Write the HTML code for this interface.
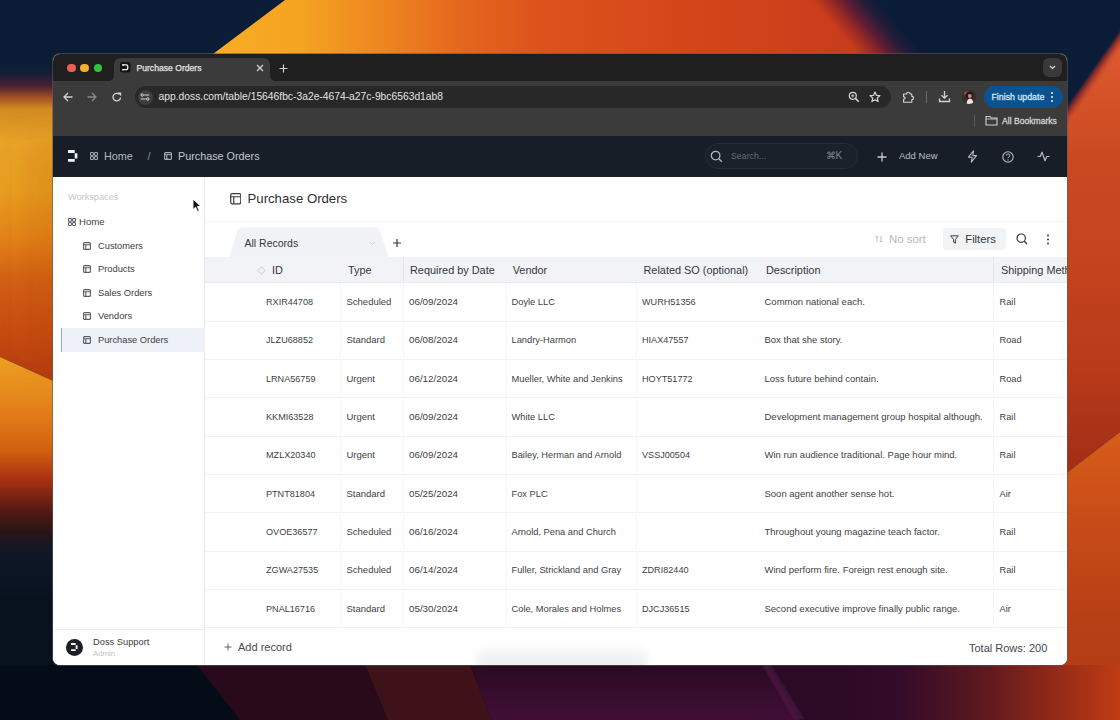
<!DOCTYPE html>
<html><head><meta charset="utf-8">
<style>
*{box-sizing:border-box;margin:0;padding:0}
html,body{width:1120px;height:720px;overflow:hidden;background:#0b1d36;font-family:"Liberation Sans",sans-serif}
.abs{position:absolute}
#bg{position:absolute;left:0;top:0}
#win{position:absolute;left:53px;top:54px;width:1014px;height:611px;border-radius:7px;overflow:hidden;background:#fff;box-shadow:0 0 0 1px rgba(90,90,90,.6)}
#tabs{position:absolute;left:0;top:0;width:1014px;height:27px;background:#1f1f1f}
#toolbar{position:absolute;left:0;top:27px;width:1014px;height:54.5px;background:#3b3b3b}
#apphdr{position:absolute;left:0;top:81.5px;width:1014px;height:41.5px;background:#171e27}
#side{position:absolute;left:0;top:123px;width:152px;height:488px;background:#fff;border-right:1px solid #e8e9ec}
#main{position:absolute;left:152px;top:123px;width:862px;height:488px;background:#fff}
.t{position:absolute;white-space:nowrap;line-height:1}
.c{height:20px;line-height:20px}
.dot{position:absolute;width:8.6px;height:8.6px;border-radius:50%}
#clip{position:absolute;left:53px;top:54px;width:1014px;height:611px;overflow:hidden;border-radius:7px}
#inner{position:absolute;left:-53px;top:-54px;width:1120px;height:720px}
#chrome,#app{position:absolute;left:0;top:0;width:1120px;height:720px}
</style></head><body>
<svg id="bg" width="1120" height="720" viewBox="0 0 1120 720">
  <defs>
    <linearGradient id="gTop" x1="200" y1="0" x2="860" y2="0" gradientUnits="userSpaceOnUse">
      <stop offset="0" stop-color="#f8ae24"/>
      <stop offset="0.15" stop-color="#f5a422"/>
      <stop offset="0.26" stop-color="#ee8a20"/>
      <stop offset="0.4" stop-color="#e4661e"/>
      <stop offset="0.52" stop-color="#dc521c"/>
      <stop offset="0.72" stop-color="#d6461a"/>
      <stop offset="1" stop-color="#c83c1c"/>
    </linearGradient>
    <linearGradient id="gLeftA" x1="0" y1="60" x2="0" y2="385" gradientUnits="userSpaceOnUse">
      <stop offset="0" stop-color="#0b1d36"/>
      <stop offset="0.04" stop-color="#121e38"/>
      <stop offset="0.08" stop-color="#4a2034"/>
      <stop offset="0.115" stop-color="#a05024"/>
      <stop offset="0.15" stop-color="#d08a20"/>
      <stop offset="0.25" stop-color="#e8a428"/>
      <stop offset="0.4" stop-color="#e8a020"/>
      <stop offset="0.55" stop-color="#e28418"/>
      <stop offset="0.68" stop-color="#d26014"/>
      <stop offset="0.85" stop-color="#c44a10"/>
      <stop offset="1" stop-color="#b0380e"/>
    </linearGradient>
    <linearGradient id="gLeftB" x1="0" y1="360" x2="0" y2="600" gradientUnits="userSpaceOnUse">
      <stop offset="0" stop-color="#eca020"/>
      <stop offset="0.25" stop-color="#e07818"/>
      <stop offset="0.38" stop-color="#d06010"/>
      <stop offset="0.5" stop-color="#a83010"/>
      <stop offset="0.62" stop-color="#5a1a14"/>
      <stop offset="0.72" stop-color="#281418"/>
      <stop offset="0.8" stop-color="#101828"/>
      <stop offset="1" stop-color="#08121e"/>
    </linearGradient>
    <linearGradient id="gRightA" x1="0" y1="40" x2="0" y2="480" gradientUnits="userSpaceOnUse">
      <stop offset="0" stop-color="#e05a30"/>
      <stop offset="0.25" stop-color="#cc4a22"/>
      <stop offset="0.5" stop-color="#c4441e"/>
      <stop offset="0.75" stop-color="#b83a1a"/>
      <stop offset="1" stop-color="#a02c16"/>
    </linearGradient>
    <linearGradient id="gRightB" x1="0" y1="430" x2="0" y2="720" gradientUnits="userSpaceOnUse">
      <stop offset="0" stop-color="#d85e1a"/>
      <stop offset="0.3" stop-color="#c84c18"/>
      <stop offset="0.65" stop-color="#b84016"/>
      <stop offset="1" stop-color="#b03a16"/>
    </linearGradient>
    <linearGradient id="gBot" x1="840" y1="0" x2="1120" y2="0" gradientUnits="userSpaceOnUse">
      <stop offset="0" stop-color="#2c0a26"/>
      <stop offset="0.22" stop-color="#340b28"/>
      <stop offset="0.5" stop-color="#5a1820"/>
      <stop offset="0.72" stop-color="#8a2618"/>
      <stop offset="1" stop-color="#c03c14"/>
    </linearGradient>
    <linearGradient id="gEdge" x1="831" y1="30" x2="873" y2="-5" gradientUnits="userSpaceOnUse">
      <stop offset="0" stop-color="#c83c1c" stop-opacity="0"/>
      <stop offset="0.1" stop-color="#c83c1c"/>
      <stop offset="0.3" stop-color="#a02c22"/>
      <stop offset="0.55" stop-color="#5e1c34"/>
      <stop offset="0.8" stop-color="#221c3a"/>
      <stop offset="1" stop-color="#0b1d36"/>
    </linearGradient>
    <linearGradient id="gREdge" x1="1087" y1="73" x2="1100" y2="82" gradientUnits="userSpaceOnUse">
      <stop offset="0" stop-color="#0b1d36" stop-opacity="0"/>
      <stop offset="0.15" stop-color="#1e1a36" stop-opacity="1"/>
      <stop offset="0.5" stop-color="#8a2a2a" stop-opacity="0.7"/>
      <stop offset="1" stop-color="#d85a30" stop-opacity="0"/>
    </linearGradient>
    <linearGradient id="gBotMid" x1="0" y1="665" x2="0" y2="720" gradientUnits="userSpaceOnUse">
      <stop offset="0" stop-color="#2a0a20"/>
      <stop offset="1" stop-color="#420e38"/>
    </linearGradient>
    <linearGradient id="gLeftH" x1="0" y1="0" x2="60" y2="0" gradientUnits="userSpaceOnUse">
      <stop offset="0" stop-color="#b04010" stop-opacity="0"/>
      <stop offset="0.5" stop-color="#b04010" stop-opacity="0.08"/>
      <stop offset="1" stop-color="#b04010" stop-opacity="0.3"/>
    </linearGradient>
    <filter id="blur12" x="-50%" y="-50%" width="200%" height="200%"><feGaussianBlur stdDeviation="14"/></filter>
    <filter id="blur4" x="-20%" y="-20%" width="140%" height="140%"><feGaussianBlur stdDeviation="4"/></filter>
    <filter id="blur1"><feGaussianBlur stdDeviation="1"/></filter>
  </defs>
  <rect width="1120" height="720" fill="#0b1d36"/>
  <!-- top -->
  <polygon points="285,0 830,0 880,60 205,60" fill="url(#gTop)"/>
  <polygon points="790,0 1000,0 1000,60 830,60" fill="url(#gEdge)"/>
  <!-- top right streak -->
  <!-- left -->
  <polygon points="0,40 60,40 60,384 0,357" fill="url(#gLeftA)"/>
  <polygon points="0,357 60,384 60,720 0,720" fill="url(#gLeftB)"/>
  <polygon points="-10,140 60,140 60,370 -10,345" fill="url(#gLeftH)" filter="url(#blur12)"/>
  <!-- right -->
  <polygon points="1060,116 1120,33 1120,432 1060,478" fill="url(#gRightA)"/>
  <polygon points="1040,145 1130,15 1150,35 1060,165" fill="url(#gREdge)"/>
  <polygon points="1060,478 1120,432 1120,665 1060,665" fill="url(#gRightB)"/>
  <!-- bottom -->
  <rect x="0" y="665" width="1120" height="60" fill="#040c18"/>
  <polygon points="197,665 365,665 388,720 240,720" fill="#290a1a"/>
  <polygon points="365,665 470,665 492,720 388,720" fill="#3e1218"/>
  <polygon points="470,665 768,665 800,720 492,720" fill="url(#gBotMid)"/>
  <polygon points="762,665 772,665 806,720 794,720" fill="#4c1640" opacity="0.8" filter="url(#blur1)"/>
  <polygon points="772,665 1120,665 1120,720 806,720" fill="url(#gBot)"/>
</svg>
<div id="win">
  <div id="tabs"></div>
  <div id="toolbar"></div>
  <div id="apphdr"></div>
  <div id="side"></div>
  <div id="main"></div>
</div>
<div id="clip"><div id="inner">
<div id="chrome">
  <!-- traffic lights -->
  <div class="dot" style="left:67.1px;top:63.7px;background:#ee5e58"></div>
  <div class="dot" style="left:80.3px;top:63.7px;background:#f4b02c"></div>
  <div class="dot" style="left:93.6px;top:63.7px;background:#2fc541"></div>
  <!-- active tab -->
  <svg class="abs" style="left:105px;top:57px" width="176" height="26" viewBox="0 0 176 26">
    <path d="M0 25 Q9 25 9 17 L9 8 Q9 1 16 1 L158 1 Q165 1 165 8 L165 17 Q165 25 174 25 L176 26 L0 26 Z" fill="#3b3b3b"/>
  </svg>
  <svg class="abs" style="left:120px;top:62.3px" width="10.5" height="10.5" viewBox="0 0 10.5 10.5">
    <rect width="10.5" height="10.5" rx="2.2" fill="#141414"/>
    <path d="M2.2 2.8 H6.2 Q7.8 2.8 7.8 4.4 V6.1 Q7.8 7.7 6.2 7.7 H2.2" stroke="#f0f0f0" stroke-width="1.3" fill="none"/>
    <path d="M2.2 2.8 H4.2 M2.2 7.7 H4.2" stroke="#f0f0f0" stroke-width="1.3"/>
  </svg>
  <div class="t c" style="left:136.5px;top:58px;font-size:8.6px;color:#e4e4e4;-webkit-text-stroke:0.25px #e4e4e4">Purchase Orders</div>
  <svg class="abs" style="left:255.5px;top:64px" width="8" height="8" viewBox="0 0 8 8"><path d="M1 1 L7 7 M7 1 L1 7" stroke="#d8d8d8" stroke-width="1.2"/></svg>
  <svg class="abs" style="left:279px;top:63.5px" width="9" height="9" viewBox="0 0 9 9"><path d="M4.5 0.5 V8.5 M0.5 4.5 H8.5" stroke="#cfcfcf" stroke-width="1.2"/></svg>
  <!-- tab strip right dropdown -->
  <div class="abs" style="left:1043px;top:58px;width:19px;height:19px;border-radius:6px;background:#3a3a3a"></div>
  <svg class="abs" style="left:1049px;top:65px" width="7" height="5" viewBox="0 0 7 5"><path d="M1 1 L3.5 3.5 L6 1" stroke="#ddd" stroke-width="1.2" fill="none"/></svg>
  <!-- nav buttons -->
  <svg class="abs" style="left:63px;top:92px" width="10" height="10" viewBox="0 0 10 10"><path d="M9.5 5 H1 M5 1 L1 5 L5 9" stroke="#d4d4d4" stroke-width="1.3" fill="none"/></svg>
  <svg class="abs" style="left:87px;top:92px" width="10" height="10" viewBox="0 0 10 10"><path d="M0.5 5 H9 M5 1 L9 5 L5 9" stroke="#8a8a8a" stroke-width="1.3" fill="none"/></svg>
  <svg class="abs" style="left:111.5px;top:92px" width="10" height="10" viewBox="0 0 10 10"><path d="M8.6 5.6 A3.8 3.8 0 1 1 7.3 2.2" stroke="#d4d4d4" stroke-width="1.3" fill="none"/><path d="M5.4 0.4 L9.2 0.4 L9.2 4.2 Z" fill="#d4d4d4"/></svg>
  <!-- url pill -->
  <div class="abs" style="left:134.5px;top:85.5px;width:756px;height:22.5px;border-radius:12px;background:#282828"></div>
  <div class="abs" style="left:137.5px;top:89.5px;width:15px;height:15px;border-radius:8px;background:#3e3e3e"></div>
  <svg class="abs" style="left:140px;top:92px" width="10" height="10" viewBox="0 0 10 10"><path d="M4.2 3 H9.2 M0.8 7 H5.8" stroke="#d8d8d8" stroke-width="1.2"/><circle cx="2.2" cy="3" r="1.2" fill="none" stroke="#d8d8d8" stroke-width="1"/><circle cx="7.8" cy="7" r="1.2" fill="none" stroke="#d8d8d8" stroke-width="1"/></svg>
  <div class="t c" style="left:158.5px;top:87px;font-size:10.3px;color:#e3e3e3;letter-spacing:0px">app.doss.com/table/15646fbc-3a2e-4674-a27c-9bc6563d1ab8</div>
  <svg class="abs" style="left:847.5px;top:91px" width="12" height="12" viewBox="0 0 12 12"><circle cx="4.8" cy="4.8" r="3.5" stroke="#d4d4d4" stroke-width="1.2" fill="none"/><path d="M7.4 7.4 L10.8 10.8" stroke="#d4d4d4" stroke-width="1.6"/><path d="M3.2 4.8 H6.4 M4.8 3.2 V6.4" stroke="#d4d4d4" stroke-width="0.9"/></svg>
  <svg class="abs" style="left:869px;top:90.5px" width="12" height="12" viewBox="0 0 12 12"><path d="M6 1 L7.4 4.3 L11 4.6 L8.3 7 L9.1 10.6 L6 8.7 L2.9 10.6 L3.7 7 L1 4.6 L4.6 4.3 Z" stroke="#d4d4d4" stroke-width="1.2" fill="none" stroke-linejoin="round"/></svg>
  <!-- right toolbar icons -->
  <svg class="abs" style="left:902px;top:90.5px" width="13" height="13" viewBox="0 0 13 13"><path d="M1.6 3 H4.6 Q4.6 1.2 6.3 1.2 Q8 1.2 8 3 H9.8 V5.3 Q11.6 5.3 11.6 7 Q11.6 8.7 9.8 8.7 V11.2 H1.6 V8.2 Q3.2 8.2 3.2 7 Q3.2 5.8 1.6 5.8 Z" stroke="#d4d4d4" stroke-width="1.15" fill="none" stroke-linejoin="round"/></svg>
  <div class="abs" style="left:926px;top:91px;width:1px;height:12px;background:#6a6a6a"></div>
  <svg class="abs" style="left:938px;top:90px" width="13" height="13" viewBox="0 0 13 13"><path d="M6.5 1 V8 M3.5 5.2 L6.5 8.2 L9.5 5.2" stroke="#d4d4d4" stroke-width="1.3" fill="none"/><path d="M1.5 8.5 V11.5 H11.5 V8.5" stroke="#d4d4d4" stroke-width="1.3" fill="none"/></svg>
  <svg class="abs" style="left:962px;top:90px" width="14" height="14" viewBox="0 0 14 14"><defs><clipPath id="av"><circle cx="7" cy="7" r="7"/></clipPath></defs><g clip-path="url(#av)"><rect width="14" height="14" fill="#3a2a28"/><circle cx="7.5" cy="5.2" r="3.6" fill="#2a1612"/><circle cx="7.8" cy="6" r="2" fill="#c08a78"/><path d="M4.5 14 Q5 9 8 8.6 Q11 9 11.5 14 Z" fill="#e8e4e2"/><path d="M2 3 Q4 0.5 8 1 Q3 2 3 6 Z" fill="#8a6a60"/></g></svg>
  <div class="abs" style="left:984.3px;top:85.8px;width:78.5px;height:22px;border-radius:11px;background:#0b5290"></div>
  <div class="t c" style="left:991.5px;top:86.5px;font-size:8.8px;color:#d4e4f4;-webkit-text-stroke:0.3px #d4e4f4">Finish update</div>
  <svg class="abs" style="left:1050px;top:91px" width="4" height="12" viewBox="0 0 4 12"><circle cx="2" cy="2" r="1.1" fill="#dfe9f5"/><circle cx="2" cy="6" r="1.1" fill="#dfe9f5"/><circle cx="2" cy="10" r="1.1" fill="#dfe9f5"/></svg>
  <!-- bookmarks bar -->
  <div class="abs" style="left:973.5px;top:115px;width:1px;height:12px;background:#5a5a5a"></div>
  <svg class="abs" style="left:984.8px;top:115px" width="13" height="11" viewBox="0 0 13 11"><path d="M1 1.5 H5 L6.3 3 H12 V10 H1 Z" stroke="#cfcfcf" stroke-width="1.1" fill="none"/><path d="M1 4 H12" stroke="#cfcfcf" stroke-width="0.9"/></svg>
  <div class="t c" style="left:1002px;top:111.3px;font-size:8.6px;color:#d4d4d4;-webkit-text-stroke:0.3px #d4d4d4">All Bookmarks</div>
</div>
<div id="app">
<svg class="abs" style="left:67.8px;top:150px" width="10" height="12" viewBox="0 0 10 12"><path d="M0 0 H6.7 V2.9 H0 Z M6.7 3.3 H9.4 V8.6 H6.7 Z M0 9 H6.7 V11.8 H0 Z" fill="#f2f2f2"/></svg>
<svg class="abs" style="left:90px;top:152px" width="8" height="8" viewBox="0 0 8 8"><rect x="0.5" y="0.5" width="2.9" height="2.9" rx="0.3" stroke="#aab0b8" stroke-width="1" fill="none"/><rect x="4.6" y="0.5" width="2.9" height="2.9" rx="0.3" stroke="#aab0b8" stroke-width="1" fill="none"/><rect x="0.5" y="4.6" width="2.9" height="2.9" rx="0.3" stroke="#aab0b8" stroke-width="1" fill="none"/><rect x="4.6" y="4.6" width="2.9" height="2.9" rx="0.3" stroke="#aab0b8" stroke-width="1" fill="none"/></svg>
<div class="t c" style="left:104px;top:146px;font-size:10.8px;color:#b4bac2">Home</div>
<div class="t c" style="left:147.5px;top:146px;font-size:10.8px;color:#8a9098">/</div>
<svg class="abs" style="left:164px;top:152px" width="8" height="8" viewBox="0 0 8 8"><rect x="0.6" y="0.6" width="6.8" height="6.8" rx="1" stroke="#aab0b8" stroke-width="1.1" fill="none"/><path d="M0.6 2.8 H7.4 M2.8 2.8 V7.4" stroke="#aab0b8" stroke-width="1.1"/></svg>
<div class="t c" style="left:178px;top:146px;font-size:10.8px;color:#c2c7ce">Purchase Orders</div>
<div class="abs" style="left:704.5px;top:142.5px;width:153px;height:26.5px;border-radius:13px;background:#19212b;border:1px solid #262e38"></div>
<svg class="abs" style="left:709.5px;top:150px" width="13" height="13" viewBox="0 0 13 13"><circle cx="5.6" cy="5.6" r="4.3" stroke="#aeb4bc" stroke-width="1.3" fill="none"/><path d="M8.8 8.8 L11.8 11.8" stroke="#aeb4bc" stroke-width="1.4"/></svg>
<div class="t c" style="left:731px;top:146px;font-size:8.8px;color:#646b74">Search...</div>
<div class="t c" style="left:825.5px;top:146px;font-size:10px;color:#7d848c">&#8984;K</div>
<svg class="abs" style="left:877px;top:151.5px" width="10" height="10" viewBox="0 0 10 10"><path d="M5 0.5 V9.5 M0.5 5 H9.5" stroke="#c8ccd2" stroke-width="1.3"/></svg>
<div class="t c" style="left:899px;top:146px;font-size:9.5px;color:#b8bdc4">Add New</div>
<svg class="abs" style="left:967px;top:150px" width="11" height="13" viewBox="0 0 11 13"><path d="M6.5 0.8 L1.5 7.2 H5.2 L4.3 12.2 L9.5 5.6 H5.8 Z" stroke="#b8bdc4" stroke-width="1.1" fill="none" stroke-linejoin="round"/></svg>
<svg class="abs" style="left:1001.5px;top:150.5px" width="12" height="12" viewBox="0 0 12 12"><circle cx="6" cy="6" r="5.2" stroke="#b8bdc4" stroke-width="1.1" fill="none"/><path d="M4.4 4.6 A1.7 1.7 0 1 1 6.6 6.2 Q6 6.5 6 7.3" stroke="#b8bdc4" stroke-width="1" fill="none"/><circle cx="6" cy="8.9" r="0.6" fill="#b8bdc4"/></svg>
<svg class="abs" style="left:1037px;top:151px" width="13" height="11" viewBox="0 0 13 11"><path d="M0.5 5.5 H3.2 L5 1.2 L8 9.8 L9.8 5.5 H12.5" stroke="#b8bdc4" stroke-width="1.2" fill="none" stroke-linejoin="round"/></svg>
<div class="t c" style="left:68px;top:187px;font-size:9.2px;color:#c6c8cc">Workspaces</div>
<svg class="abs" style="left:68px;top:218px" width="8" height="8" viewBox="0 0 8 8"><rect x="0.5" y="0.5" width="2.9" height="2.9" rx="0.3" stroke="#555a60" stroke-width="1" fill="none"/><rect x="4.6" y="0.5" width="2.9" height="2.9" rx="0.3" stroke="#555a60" stroke-width="1" fill="none"/><rect x="0.5" y="4.6" width="2.9" height="2.9" rx="0.3" stroke="#555a60" stroke-width="1" fill="none"/><rect x="4.6" y="4.6" width="2.9" height="2.9" rx="0.3" stroke="#555a60" stroke-width="1" fill="none"/></svg>
<div class="t c" style="left:79px;top:211.7px;font-size:9.6px;color:#3a3d42">Home</div>
<div class="abs" style="left:60.5px;top:328px;width:144.5px;height:24px;background:#eef2f8;border-left:1px solid #8eaad0"></div>
<svg class="abs" style="left:83.3px;top:242px" width="8" height="8" viewBox="0 0 8 8"><rect x="0.6" y="0.6" width="6.8" height="6.8" rx="1" stroke="#5a5e64" stroke-width="1.1" fill="none"/><path d="M0.6 2.8 H7.4 M2.8 2.8 V7.4" stroke="#5a5e64" stroke-width="1.1"/></svg>
<div class="t c" style="left:98px;top:236px;font-size:9.3px;color:#3a3d42">Customers</div>
<svg class="abs" style="left:83.3px;top:265.3px" width="8" height="8" viewBox="0 0 8 8"><rect x="0.6" y="0.6" width="6.8" height="6.8" rx="1" stroke="#5a5e64" stroke-width="1.1" fill="none"/><path d="M0.6 2.8 H7.4 M2.8 2.8 V7.4" stroke="#5a5e64" stroke-width="1.1"/></svg>
<div class="t c" style="left:98px;top:259.3px;font-size:9.3px;color:#3a3d42">Products</div>
<svg class="abs" style="left:83.3px;top:288.9px" width="8" height="8" viewBox="0 0 8 8"><rect x="0.6" y="0.6" width="6.8" height="6.8" rx="1" stroke="#5a5e64" stroke-width="1.1" fill="none"/><path d="M0.6 2.8 H7.4 M2.8 2.8 V7.4" stroke="#5a5e64" stroke-width="1.1"/></svg>
<div class="t c" style="left:98px;top:282.9px;font-size:9.3px;color:#3a3d42">Sales Orders</div>
<svg class="abs" style="left:83.3px;top:312.2px" width="8" height="8" viewBox="0 0 8 8"><rect x="0.6" y="0.6" width="6.8" height="6.8" rx="1" stroke="#5a5e64" stroke-width="1.1" fill="none"/><path d="M0.6 2.8 H7.4 M2.8 2.8 V7.4" stroke="#5a5e64" stroke-width="1.1"/></svg>
<div class="t c" style="left:98px;top:306.2px;font-size:9.3px;color:#3a3d42">Vendors</div>
<svg class="abs" style="left:83.3px;top:335.5px" width="8" height="8" viewBox="0 0 8 8"><rect x="0.6" y="0.6" width="6.8" height="6.8" rx="1" stroke="#5a5e64" stroke-width="1.1" fill="none"/><path d="M0.6 2.8 H7.4 M2.8 2.8 V7.4" stroke="#5a5e64" stroke-width="1.1"/></svg>
<div class="t c" style="left:98px;top:329.5px;font-size:9.3px;color:#3a3d42">Purchase Orders</div>
<svg class="abs" style="left:192px;top:198px" width="10" height="15" viewBox="0 0 10 15"><path d="M1 1 L1 11.5 L3.6 9.2 L5.5 13.5 L7.2 12.8 L5.4 8.6 L8.8 8.4 Z" fill="#111" stroke="#fff" stroke-width="0.9"/></svg>
<div class="abs" style="left:53px;top:628.5px;width:152px;height:1px;background:#eceef1"></div>
<div class="abs" style="left:65.8px;top:638.7px;width:17px;height:17px;border-radius:9px;background:#1c1f24"></div>
<svg class="abs" style="left:71px;top:643px" width="7" height="8.4" viewBox="0 0 10 12"><path d="M0 0 H6.7 V2.9 H0 Z M6.7 3.3 H9.4 V8.6 H6.7 Z M0 9 H6.7 V11.8 H0 Z" fill="#f4f4f4"/></svg>
<div class="t c" style="left:93px;top:632px;font-size:9.3px;color:#3a3d42">Doss Support</div>
<div class="t c" style="left:93px;top:644px;font-size:7.8px;color:#c0c2c6">Admin</div>
<svg class="abs" style="left:229.5px;top:193px" width="11.5" height="11.5" viewBox="0 0 8 8"><rect x="0.5" y="0.5" width="7" height="7" rx="1" stroke="#3a3d42" stroke-width="0.85" fill="none"/><path d="M0.5 2.6 H7.5 M2.6 2.6 V7.5" stroke="#3a3d42" stroke-width="0.85"/></svg>
<div class="t c" style="left:247.5px;top:188.8px;font-size:13.2px;color:#2c2f33">Purchase Orders</div>
<div class="abs" style="left:205px;top:220.5px;width:862px;height:1px;background:#f3f4f5"></div>
<svg class="abs" style="left:228px;top:227px" width="162" height="31" viewBox="0 0 162 31"><path d="M1 31 L9 4 Q10 0.5 14 0.5 L147 0.5 Q151 0.5 152 4 L161 31 Z" fill="#f1f2f5"/></svg>
<div class="t c" style="left:244.5px;top:233.4px;font-size:10.5px;color:#34373c">All Records</div>
<svg class="abs" style="left:369px;top:241px" width="7" height="5" viewBox="0 0 7 5"><path d="M1 1 L3.5 3.5 L6 1" stroke="#cfd2d6" stroke-width="1" fill="none"/></svg>
<svg class="abs" style="left:392.5px;top:239px" width="8" height="8" viewBox="0 0 8 8"><path d="M4 0 V8 M0 4 H8" stroke="#34373c" stroke-width="1.2"/></svg>
<svg class="abs" style="left:875px;top:235px" width="8" height="8" viewBox="0 0 8 8"><path d="M2 7 V1 M0.6 2.4 L2 1 L3.4 2.4 M6 1 V7 M4.6 5.6 L6 7 L7.4 5.6" stroke="#b4b7bb" stroke-width="0.9" fill="none"/></svg>
<div class="t c" style="left:889px;top:229.3px;font-size:11.4px;color:#b4b7bb">No sort</div>
<div class="abs" style="left:942.5px;top:227.5px;width:63.5px;height:22.5px;border-radius:4px;background:#f2f3f5"></div>
<svg class="abs" style="left:950px;top:235px" width="9" height="9" viewBox="0 0 9 9"><path d="M0.7 0.8 H8.3 L5.4 4.6 V8.2 L3.6 7.2 V4.6 Z" stroke="#3a3d42" stroke-width="1" fill="none" stroke-linejoin="round"/></svg>
<div class="t c" style="left:965.3px;top:229.3px;font-size:11.2px;color:#34373c">Filters</div>
<svg class="abs" style="left:1015.5px;top:233px" width="12" height="12" viewBox="0 0 12 12"><circle cx="5.2" cy="5.2" r="4.2" stroke="#34373c" stroke-width="1.2" fill="none"/><path d="M8.3 8.3 L11 11" stroke="#34373c" stroke-width="1.3"/></svg>
<svg class="abs" style="left:1045.5px;top:234px" width="4" height="11" viewBox="0 0 4 11"><circle cx="2" cy="1.6" r="1" fill="#34373c"/><circle cx="2" cy="5.5" r="1" fill="#34373c"/><circle cx="2" cy="9.4" r="1" fill="#34373c"/></svg>
<div class="abs" style="left:205px;top:257px;width:862px;height:26px;background:#f2f3f6;border-bottom:1px solid #e9ebee"></div>
<svg class="abs" style="left:256.5px;top:265.5px" width="9" height="9" viewBox="0 0 9 9"><path d="M4.5 0.8 L8.2 4.5 L4.5 8.2 L0.8 4.5 Z" stroke="#c4c7cc" stroke-width="0.9" fill="none"/></svg>
<div class="t c" style="left:272px;top:260px;font-size:10.9px;color:#34373c">ID</div>
<div class="t c" style="left:348px;top:260px;font-size:10.9px;color:#34373c">Type</div>
<div class="t c" style="left:410px;top:260px;font-size:10.9px;color:#34373c">Required by Date</div>
<div class="t c" style="left:512.7px;top:260px;font-size:10.9px;color:#34373c">Vendor</div>
<div class="t c" style="left:643.5px;top:260px;font-size:10.9px;color:#34373c">Related SO (optional)</div>
<div class="t c" style="left:766px;top:260px;font-size:10.9px;color:#34373c">Description</div>
<div class="t c" style="left:1001px;top:260px;font-size:10.9px;color:#34373c">Shipping Meth</div>
<div class="abs" style="left:402.5px;top:258px;width:1px;height:24px;background:#e3e5e8"></div>
<div class="abs" style="left:993px;top:258px;width:1px;height:24px;background:#e3e5e8"></div>
<div class="abs" style="left:205px;top:320.8px;width:862px;height:1px;background:#f1f2f4"></div>
<div class="t c" style="left:266px;top:292.1px;font-size:9.1px;color:#3c3f44">RXIR44708</div>
<div class="t c" style="left:346.5px;top:292.1px;font-size:9.5px;color:#3c3f44">Scheduled</div>
<div class="t c" style="left:409px;top:292.1px;font-size:9.8px;color:#3c3f44">06/09/2024</div>
<div class="t c" style="left:511.5px;top:292.1px;font-size:9.3px;color:#3c3f44">Doyle LLC</div>
<div class="t c" style="left:642px;top:292.1px;font-size:9.1px;color:#3c3f44">WURH51356</div>
<div class="t c" style="left:764.5px;top:292.1px;font-size:9.5px;color:#3c3f44">Common national each.</div>
<div class="t c" style="left:999.6px;top:292.1px;font-size:9.2px;color:#3c3f44">Rail</div>
<div class="abs" style="left:205px;top:359.1px;width:862px;height:1px;background:#f1f2f4"></div>
<div class="t c" style="left:266px;top:330.4px;font-size:9.1px;color:#3c3f44">JLZU68852</div>
<div class="t c" style="left:346.5px;top:330.4px;font-size:9.5px;color:#3c3f44">Standard</div>
<div class="t c" style="left:409px;top:330.4px;font-size:9.8px;color:#3c3f44">06/08/2024</div>
<div class="t c" style="left:511.5px;top:330.4px;font-size:9.3px;color:#3c3f44">Landry-Harmon</div>
<div class="t c" style="left:642px;top:330.4px;font-size:9.1px;color:#3c3f44">HIAX47557</div>
<div class="t c" style="left:764.5px;top:330.4px;font-size:9.5px;color:#3c3f44">Box that she story.</div>
<div class="t c" style="left:999.6px;top:330.4px;font-size:9.2px;color:#3c3f44">Road</div>
<div class="abs" style="left:205px;top:397.4px;width:862px;height:1px;background:#f1f2f4"></div>
<div class="t c" style="left:266px;top:368.8px;font-size:9.1px;color:#3c3f44">LRNA56759</div>
<div class="t c" style="left:346.5px;top:368.8px;font-size:9.5px;color:#3c3f44">Urgent</div>
<div class="t c" style="left:409px;top:368.8px;font-size:9.8px;color:#3c3f44">06/12/2024</div>
<div class="t c" style="left:511.5px;top:368.8px;font-size:9.3px;color:#3c3f44">Mueller, White and Jenkins</div>
<div class="t c" style="left:642px;top:368.8px;font-size:9.1px;color:#3c3f44">HOYT51772</div>
<div class="t c" style="left:764.5px;top:368.8px;font-size:9.5px;color:#3c3f44">Loss future behind contain.</div>
<div class="t c" style="left:999.6px;top:368.8px;font-size:9.2px;color:#3c3f44">Road</div>
<div class="abs" style="left:205px;top:435.7px;width:862px;height:1px;background:#f1f2f4"></div>
<div class="t c" style="left:266px;top:407.0px;font-size:9.1px;color:#3c3f44">KKMI63528</div>
<div class="t c" style="left:346.5px;top:407.0px;font-size:9.5px;color:#3c3f44">Urgent</div>
<div class="t c" style="left:409px;top:407.0px;font-size:9.8px;color:#3c3f44">06/09/2024</div>
<div class="t c" style="left:511.5px;top:407.0px;font-size:9.3px;color:#3c3f44">White LLC</div>
<div class="t c" style="left:764.5px;top:407.0px;font-size:9.5px;color:#3c3f44">Development management group hospital although.</div>
<div class="t c" style="left:999.6px;top:407.0px;font-size:9.2px;color:#3c3f44">Rail</div>
<div class="abs" style="left:205px;top:474.0px;width:862px;height:1px;background:#f1f2f4"></div>
<div class="t c" style="left:266px;top:445.3px;font-size:9.1px;color:#3c3f44">MZLX20340</div>
<div class="t c" style="left:346.5px;top:445.3px;font-size:9.5px;color:#3c3f44">Urgent</div>
<div class="t c" style="left:409px;top:445.3px;font-size:9.8px;color:#3c3f44">06/09/2024</div>
<div class="t c" style="left:511.5px;top:445.3px;font-size:9.3px;color:#3c3f44">Bailey, Herman and Arnold</div>
<div class="t c" style="left:642px;top:445.3px;font-size:9.1px;color:#3c3f44">VSSJ00504</div>
<div class="t c" style="left:764.5px;top:445.3px;font-size:9.5px;color:#3c3f44">Win run audience traditional. Page hour mind.</div>
<div class="t c" style="left:999.6px;top:445.3px;font-size:9.2px;color:#3c3f44">Rail</div>
<div class="abs" style="left:205px;top:512.3px;width:862px;height:1px;background:#f1f2f4"></div>
<div class="t c" style="left:266px;top:483.6px;font-size:9.1px;color:#3c3f44">PTNT81804</div>
<div class="t c" style="left:346.5px;top:483.6px;font-size:9.5px;color:#3c3f44">Standard</div>
<div class="t c" style="left:409px;top:483.6px;font-size:9.8px;color:#3c3f44">05/25/2024</div>
<div class="t c" style="left:511.5px;top:483.6px;font-size:9.3px;color:#3c3f44">Fox PLC</div>
<div class="t c" style="left:764.5px;top:483.6px;font-size:9.5px;color:#3c3f44">Soon agent another sense hot.</div>
<div class="t c" style="left:999.6px;top:483.6px;font-size:9.2px;color:#3c3f44">Air</div>
<div class="abs" style="left:205px;top:550.6px;width:862px;height:1px;background:#f1f2f4"></div>
<div class="t c" style="left:266px;top:521.9px;font-size:9.1px;color:#3c3f44">OVOE36577</div>
<div class="t c" style="left:346.5px;top:521.9px;font-size:9.5px;color:#3c3f44">Scheduled</div>
<div class="t c" style="left:409px;top:521.9px;font-size:9.8px;color:#3c3f44">06/16/2024</div>
<div class="t c" style="left:511.5px;top:521.9px;font-size:9.3px;color:#3c3f44">Arnold, Pena and Church</div>
<div class="t c" style="left:764.5px;top:521.9px;font-size:9.5px;color:#3c3f44">Throughout young magazine teach factor.</div>
<div class="t c" style="left:999.6px;top:521.9px;font-size:9.2px;color:#3c3f44">Rail</div>
<div class="abs" style="left:205px;top:588.9px;width:862px;height:1px;background:#f1f2f4"></div>
<div class="t c" style="left:266px;top:560.2px;font-size:9.1px;color:#3c3f44">ZGWA27535</div>
<div class="t c" style="left:346.5px;top:560.2px;font-size:9.5px;color:#3c3f44">Scheduled</div>
<div class="t c" style="left:409px;top:560.2px;font-size:9.8px;color:#3c3f44">06/14/2024</div>
<div class="t c" style="left:511.5px;top:560.2px;font-size:9.3px;color:#3c3f44">Fuller, Strickland and Gray</div>
<div class="t c" style="left:642px;top:560.2px;font-size:9.1px;color:#3c3f44">ZDRI82440</div>
<div class="t c" style="left:764.5px;top:560.2px;font-size:9.5px;color:#3c3f44">Wind perform fire. Foreign rest enough site.</div>
<div class="t c" style="left:999.6px;top:560.2px;font-size:9.2px;color:#3c3f44">Rail</div>
<div class="abs" style="left:205px;top:627.2px;width:862px;height:1px;background:#f1f2f4"></div>
<div class="t c" style="left:266px;top:598.5px;font-size:9.1px;color:#3c3f44">PNAL16716</div>
<div class="t c" style="left:346.5px;top:598.5px;font-size:9.5px;color:#3c3f44">Standard</div>
<div class="t c" style="left:409px;top:598.5px;font-size:9.8px;color:#3c3f44">05/30/2024</div>
<div class="t c" style="left:511.5px;top:598.5px;font-size:9.3px;color:#3c3f44">Cole, Morales and Holmes</div>
<div class="t c" style="left:642px;top:598.5px;font-size:9.1px;color:#3c3f44">DJCJ36515</div>
<div class="t c" style="left:764.5px;top:598.5px;font-size:9.5px;color:#3c3f44">Second executive improve finally public range.</div>
<div class="t c" style="left:999.6px;top:598.5px;font-size:9.2px;color:#3c3f44">Air</div>
<div class="abs" style="left:340px;top:283px;width:1px;height:345px;background:#f5f6f7"></div>
<div class="abs" style="left:402.5px;top:283px;width:1px;height:345px;background:#f5f6f7"></div>
<div class="abs" style="left:505.5px;top:283px;width:1px;height:345px;background:#f5f6f7"></div>
<div class="abs" style="left:635.5px;top:283px;width:1px;height:345px;background:#f5f6f7"></div>
<div class="abs" style="left:993px;top:283px;width:1px;height:345px;background:#f5f6f7"></div>
<svg class="abs" style="left:223.5px;top:643px" width="8" height="8" viewBox="0 0 8 8"><path d="M4 0.5 V7.5 M0.5 4 H7.5" stroke="#55585d" stroke-width="0.9"/></svg>
<div class="abs" style="left:476px;top:647px;width:172px;height:24px;border-radius:12px;background:linear-gradient(to bottom,rgba(240,241,243,.3),rgba(228,229,232,.85));filter:blur(4px)"></div>
<div class="t c" style="left:238px;top:637px;font-size:11px;color:#46494e">Add record</div>
<div class="t c" style="left:969px;top:637.7px;font-size:11px;color:#44474c">Total Rows: 200</div>
</div>
</div></div>
</body></html>
